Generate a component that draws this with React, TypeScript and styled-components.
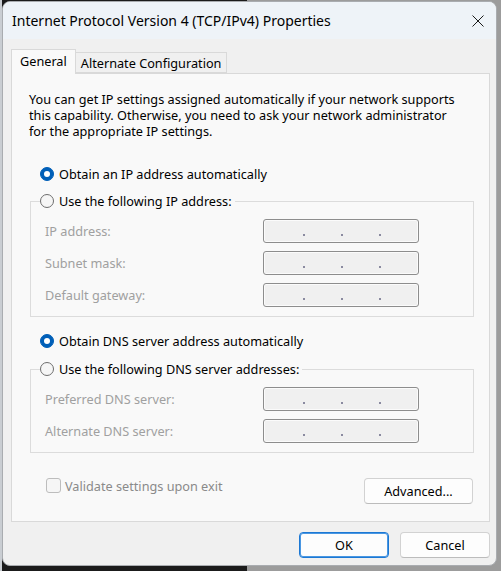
import React from 'react';
import styled, { createGlobalStyle } from 'styled-components';

const Global = createGlobalStyle`
  html, body { margin: 0; padding: 0; }
  body {
    width: 501px;
    height: 571px;
    overflow: hidden;
    font-family: "Noto Sans", "Open Sans", sans-serif;
    font-size: 12.7px;
    color: #000;
    background:
      linear-gradient(to right, #c9cdd2 0 2px, transparent 2px),
      linear-gradient(to right, #1b1b1b 0 247px, #9c9c9c 247px);
  }
  #root {
    box-sizing: border-box;
    height: 571px;
    padding: 1px 4px 5px 2px;
  }
`;

const Window = styled.div`
  box-sizing: border-box;
  width: 495px;
  height: 565px;
  border: 1px solid #a9acb0;
  border-radius: 8px;
  background: #f0f0f0;
  overflow: hidden;
  display: flex;
  flex-direction: column;
`;

const TitleBar = styled.div`
  height: 37px;
  flex: none;
  display: flex;
  align-items: center;
  padding-left: 9px;
  background: #eef3f8;
  font-size: 14px;
`;

const Title = styled.div`
  flex: 1;
`;

const Close = styled.div`
  display: flex;
  align-items: center;
  justify-content: center;
  width: 36px;
  height: 37px;
`;

const Body = styled.div`
  padding: 10px 6px 0 8px;
  display: flex;
  flex-direction: column;
`;

const TabRow = styled.div`
  display: flex;
  align-items: flex-end;
`;

const Tab = styled.div<{ $active?: boolean }>`
  box-sizing: border-box;
  position: relative;
  z-index: ${p => (p.$active ? 1 : 0)};
  height: ${p => (p.$active ? 25 : 21)}px;
  margin-bottom: ${p => (p.$active ? -1 : 0)}px;
  padding: ${p => (p.$active ? '2px 8px 0 8px' : '1px 5px 0 5px')};
  background: ${p => (p.$active ? '#f9f9f9' : '#f0f0f0')};
  border: 1px solid #d9d9d9;
  border-bottom: ${p => (p.$active ? 'none' : '1px solid #d9d9d9')};
  margin-left: ${p => (p.$active ? 0 : -1)}px;
  line-height: 18px;
`;

const Panel = styled.div`
  box-sizing: border-box;
  border: 1px solid #d9d9d9;
  background: #f9f9f9;
  padding: 17px 0 17px 0;
  display: flex;
  flex-direction: column;
`;

const Description = styled.p`
  margin: 0;
  padding: 0 29px 0 17px;
  line-height: 16px;
`;

const RadioRow = styled.label<{ $top: number }>`
  display: flex;
  align-items: center;
  gap: 5px;
  height: 16px;
  margin: ${p => p.$top}px 0 0 28px;
  white-space: nowrap;
`;

const RadioDot = styled.span<{ $checked?: boolean }>`
  box-sizing: border-box;
  flex: none;
  width: 14px;
  height: 14px;
  border-radius: 50%;
  display: flex;
  align-items: center;
  justify-content: center;
  background: ${p => (p.$checked ? '#005fb8' : '#f6f6f6')};
  border: 1px solid ${p => (p.$checked ? '#005fb8' : '#6e6e6e')};
  &::after {
    content: '';
    display: ${p => (p.$checked ? 'block' : 'none')};
    width: 6px;
    height: 6px;
    border-radius: 50%;
    background: #fff;
  }
`;

const Group = styled.fieldset<{ $top: number }>`
  margin: ${p => p.$top}px 15px 0 18px;
  padding: 0 0 9px 14px;
  border: 1px solid #dcdcdc;
  min-width: 0;
`;

const Legend = styled.legend`
  margin-left: -5px;
  padding: 0 3px 0 0;
  display: flex;
  align-items: center;
  gap: 5px;
  height: 16px;
  white-space: nowrap;
`;

const FieldGrid = styled.div`
  display: grid;
  grid-template-columns: 218px 156px;
  row-gap: 8px;
  margin-top: 10px;
  align-items: center;
`;

const FieldLabel = styled.span`
  color: #a0a0a0;
`;

const IpBox = styled.div`
  box-sizing: border-box;
  height: 24px;
  border: 1px solid #8d8d8d;
  border-radius: 3px;
  background: #f0f0f0;
  box-shadow: inset 0 0 0 1px #fbfbfb;
  display: grid;
  grid-template-columns: 40px 38px 38px 38px;
  align-items: end;
  padding-bottom: 6px;
`;

const Octet = styled.span`
  display: flex;
  justify-content: flex-end;
  &::after {
    content: '';
    width: 2px;
    height: 2px;
    background: #8a8aa0;
    margin-right: -1px;
  }
  &:last-child::after {
    display: none;
  }
`;

const BottomRow = styled.div`
  display: flex;
  align-items: flex-start;
  justify-content: space-between;
  margin: 25px 16px 0 34px;
`;

const CheckRow = styled.label`
  display: flex;
  align-items: center;
  gap: 4px;
  height: 15px;
  color: #8a8a8a;
`;

const CheckBox = styled.span`
  box-sizing: border-box;
  width: 15px;
  height: 15px;
  border: 1px solid #bdbdbd;
  border-radius: 3px;
  background: #f6f6f6;
`;

const Button = styled.button<{ $default?: boolean; $w: number }>`
  box-sizing: border-box;
  width: ${p => p.$w}px;
  height: 26px;
  font-family: inherit;
  font-size: 12.7px;
  color: #000;
  background: #fdfdfd;
  border-radius: 4px;
  border: 1px solid ${p => (p.$default ? '#1c78d4' : '#d2d2d2')};
  border-bottom-color: ${p => (p.$default ? '#1c78d4' : '#bcbcbc')};
  box-shadow: ${p => (p.$default ? 'inset 0 0 0 1px #4a97e2' : 'none')};
  padding: 0;
`;

const Footer = styled.div`
  display: flex;
  justify-content: flex-end;
  gap: 11px;
  margin-top: 10px;
`;

const IpField = () => (
  <IpBox>
    <Octet />
    <Octet />
    <Octet />
    <Octet />
  </IpBox>
);

export default function App() {
  return (
    <>
      <Global />
      <Window>
        <TitleBar>
          <Title>Internet Protocol Version 4 (TCP/IPv4) Properties</Title>
          <Close>
            <svg width="12" height="12" viewBox="0 0 12 12">
              <path d="M0.5 0.5 L11.5 11.5 M11.5 0.5 L0.5 11.5" stroke="#1a1a1a" strokeWidth="1" />
            </svg>
          </Close>
        </TitleBar>
        <Body>
          <TabRow>
            <Tab $active>General</Tab>
            <Tab>Alternate Configuration</Tab>
          </TabRow>
          <Panel>
            <Description>
              You can get IP settings assigned automatically if your network supports this capability. Otherwise, you need to ask your network administrator for the appropriate IP settings.
            </Description>
            <RadioRow $top={27}>
              <RadioDot $checked />
              Obtain an IP address automatically
            </RadioRow>
            <Group $top={11}>
              <Legend>
                <RadioDot />
                Use the following IP address:
              </Legend>
              <FieldGrid>
                <FieldLabel>IP address:</FieldLabel>
                <IpField />
                <FieldLabel>Subnet mask:</FieldLabel>
                <IpField />
                <FieldLabel>Default gateway:</FieldLabel>
                <IpField />
              </FieldGrid>
            </Group>
            <RadioRow $top={16}>
              <RadioDot $checked />
              Obtain DNS server address automatically
            </RadioRow>
            <Group $top={12}>
              <Legend>
                <RadioDot />
                Use the following DNS server addresses:
              </Legend>
              <FieldGrid>
                <FieldLabel>Preferred DNS server:</FieldLabel>
                <IpField />
                <FieldLabel>Alternate DNS server:</FieldLabel>
                <IpField />
              </FieldGrid>
            </Group>
            <BottomRow>
              <CheckRow>
                <CheckBox />
                Validate settings upon exit
              </CheckRow>
              <Button $w={109}>Advanced...</Button>
            </BottomRow>
          </Panel>
          <Footer>
            <Button $default $w={90}>OK</Button>
            <Button $w={90}>Cancel</Button>
          </Footer>
        </Body>
      </Window>
    </>
  );
}
